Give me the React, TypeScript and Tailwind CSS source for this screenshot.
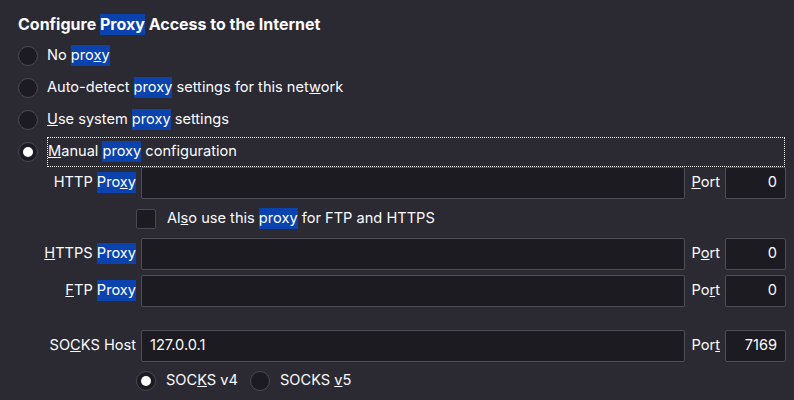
import React from 'react';

const HL: React.FC<{ children: React.ReactNode }> = ({ children }) => (
  <span className="inline-block bg-[#0a43ad] leading-[21px] text-white">{children}</span>
);

const Radio: React.FC<{ checked?: boolean }> = ({ checked = false }) => (
  <span className="flex h-[20px] w-[20px] shrink-0 items-center justify-center rounded-full border border-[#4a4953] bg-[#1c1b22]">
    {checked && <span className="h-[10px] w-[10px] rounded-full bg-white" />}
  </span>
);

const Field: React.FC<{ value?: string; right?: boolean }> = ({ value = '', right = false }) => (
  <div
    className={`flex h-[32px] items-center rounded-[2px] border border-[#4f4e57] bg-[#1c1b22] px-[8px] ${
      right ? 'justify-end' : 'justify-start'
    }`}
  >
    {value}
  </div>
);

const App: React.FC = () => {
  return (
    <div
      className="h-[400px] w-[794px] overflow-hidden bg-[#2b2a33] text-[14.6px] text-[#fbfbfe]"
      style={{ fontFamily: 'Inter, "Noto Sans", sans-serif' }}
    >
      <div className="pl-[18px] pt-[13px]">
        <h1 className="text-[16px] font-bold leading-[22px]">
          Configure <HL>Proxy</HL> Access to the Internet
        </h1>

        <div className="mt-[10px] flex flex-col gap-[10px] pr-[9px]">
          <label className="flex h-[22px] items-center gap-[9px]">
            <Radio />
            <span>
              No <HL>pro<u>x</u>y</HL>
            </span>
          </label>
          <label className="flex h-[22px] items-center gap-[9px]">
            <Radio />
            <span>
              Auto-detect <HL>proxy</HL> settings for this net<u>w</u>ork
            </span>
          </label>
          <label className="flex h-[22px] items-center gap-[9px]">
            <Radio />
            <span>
              <u>U</u>se system <HL>proxy</HL> settings
            </span>
          </label>
          <label className="flex h-[22px] items-center gap-[9px]">
            <Radio checked />
            <span className="flex h-[30px] flex-1 items-center border border-dotted border-white">
              <span>
                <u>M</u>anual <HL>proxy</HL> configuration
              </span>
            </span>
          </label>
        </div>
      </div>

      <div className="mt-[4px] grid grid-cols-[136px_1fr_auto_61px] items-center gap-x-[5px] pr-[8px]">
        <span className="text-right">
          HTTP <HL>Pro<u>x</u>y</HL>
        </span>
        <Field />
        <span className="pl-[1px]">
          <u>P</u>ort
        </span>
        <Field value="0" right />

        <label className="col-span-4 flex h-[39px] items-center gap-[11px] pl-[136px]">
          <span className="h-[20px] w-[20px] rounded-[2px] border border-[#4a4953] bg-[#1c1b22]" />
          <span>
            Al<u>s</u>o use this <HL>proxy</HL> for FTP and HTTPS
          </span>
        </label>

        <span className="text-right">
          <u>H</u>TTPS <HL>Proxy</HL>
        </span>
        <Field />
        <span className="pl-[1px]">
          P<u>o</u>rt
        </span>
        <Field value="0" right />

        <span className="mt-[5px] text-right">
          <u>F</u>TP <HL>Proxy</HL>
        </span>
        <div className="mt-[5px]">
          <Field />
        </div>
        <span className="mt-[5px] pl-[1px]">
          Po<u>r</u>t
        </span>
        <div className="mt-[5px]">
          <Field value="0" right />
        </div>

        <span className="mt-[23px] text-right">
          SO<u>C</u>KS Host
        </span>
        <div className="mt-[23px]">
          <Field value="127.0.0.1" />
        </div>
        <span className="mt-[23px] pl-[1px]">
          Por<u>t</u>
        </span>
        <div className="mt-[23px]">
          <Field value="7169" right />
        </div>

        <div className="col-span-4 flex h-[38px] items-center pl-[136px]">
          <Radio checked />
          <span className="ml-[10px]">
            SOC<u>K</u>S v4
          </span>
          <span className="ml-[12px]">
            <Radio />
          </span>
          <span className="ml-[10px]">
            SOCKS <u>v</u>5
          </span>
        </div>
      </div>
    </div>
  );
};

export default App;
